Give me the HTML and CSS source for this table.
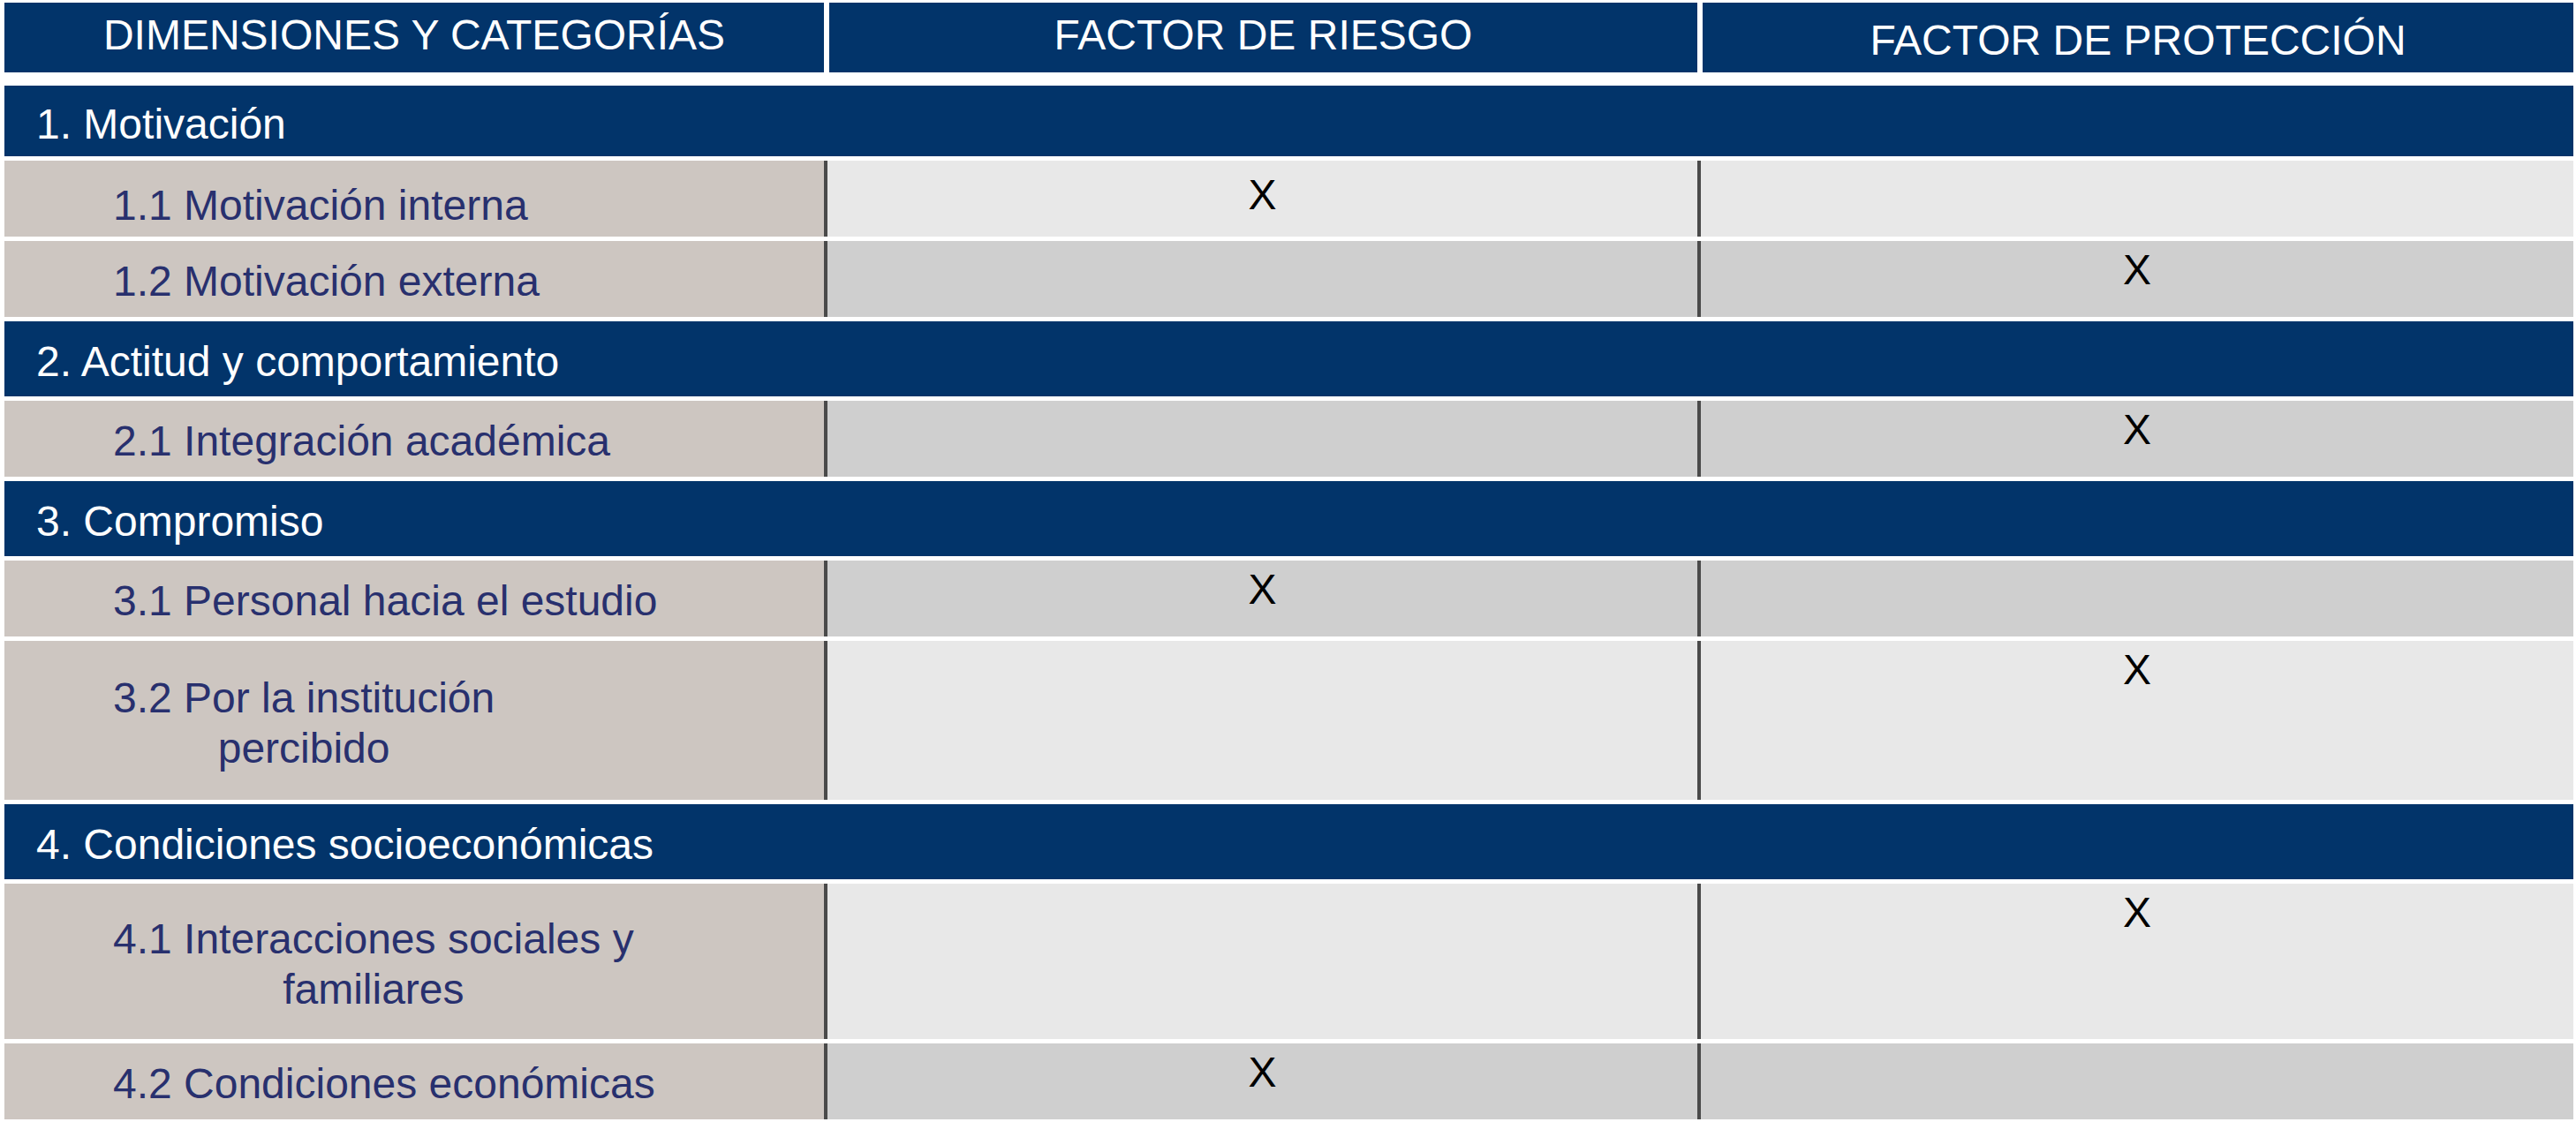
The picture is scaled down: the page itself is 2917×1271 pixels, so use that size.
FILE: index.html
```html
<!DOCTYPE html>
<html lang="es">
<head>
<meta charset="utf-8">
<title>Dimensiones y categorías</title>
<link rel="stylesheet" href="styles.css">
</head>
<body>
<div class="table">
  <div class="row head">
    <div class="hcell">DIMENSIONES Y CATEGORÍAS</div>
    <div class="hcell">FACTOR DE RIESGO</div>
    <div class="hcell hcell--low">FACTOR DE PROTECCIÓN</div>
  </div>

  <div class="section section--first">1. Motivación</div>
  <div class="row data data--first">
    <div class="label"><span class="label-text">1.1 Motivación interna</span></div>
    <div class="cell light">X</div>
    <div class="cell light"></div>
  </div>
  <div class="row data">
    <div class="label"><span class="label-text">1.2 Motivación externa</span></div>
    <div class="cell dark"></div>
    <div class="cell dark">X</div>
  </div>

  <div class="section">2. Actitud y comportamiento</div>
  <div class="row data">
    <div class="label"><span class="label-text">2.1 Integración académica</span></div>
    <div class="cell dark"></div>
    <div class="cell dark">X</div>
  </div>

  <div class="section">3. Compromiso</div>
  <div class="row data">
    <div class="label"><span class="label-text">3.1 Personal hacia el estudio</span></div>
    <div class="cell dark">X</div>
    <div class="cell dark"></div>
  </div>
  <div class="row data data--tall">
    <div class="label"><span class="label-text">3.2 Por la institución<br>percibido</span></div>
    <div class="cell light"></div>
    <div class="cell light">X</div>
  </div>

  <div class="section">4. Condiciones socioeconómicas</div>
  <div class="row data data--tall2">
    <div class="label"><span class="label-text">4.1 Interacciones sociales y<br>familiares</span></div>
    <div class="cell light"></div>
    <div class="cell light">X</div>
  </div>
  <div class="row data">
    <div class="label"><span class="label-text">4.2 Condiciones económicas</span></div>
    <div class="cell dark">X</div>
    <div class="cell dark"></div>
  </div>
</div>
</body>
</html>
```

FILE: styles.css
```css
html, body {
  margin: 0;
  padding: 0;
  background: #ffffff;
}

body {
  font-family: "Liberation Sans", Arial, Helvetica, sans-serif;
  font-size: 48px;
  width: 2917px;
  height: 1271px;
  overflow: hidden;
}

.table {
  display: flex;
  flex-direction: column;
  gap: 5px;
  padding: 3px 3px 0 5px;
}

.row {
  display: grid;
}

.head {
  grid-template-columns: 928px 983px 986px;
  column-gap: 6px;
  height: 79px;
  margin-bottom: 10px;
}

.hcell {
  background: #02346a;
  color: #ffffff;
  text-align: center;
  padding-top: 10px;
  line-height: 54px;
}

.hcell--low {
  padding-top: 16px;
}

.section {
  background: #02346a;
  color: #ffffff;
  height: 85px;
  display: flex;
  align-items: center;
  padding: 6px 0 0 36px;
  box-sizing: border-box;
}

.section--first {
  height: 80px;
}

.data {
  grid-template-columns: 928px 989px 992px;
  height: 86px;
}

.data--tall {
  height: 180px;
}

.data--tall2 {
  height: 176px;
}

.label {
  background: #cdc6c1;
  color: #28306e;
  display: flex;
  align-items: center;
  padding-left: 123px;
  padding-top: 5px;
}

.data--first .label {
  padding-top: 14px;
}

.label-text {
  display: inline-block;
  text-align: center;
  line-height: 57px;
}

.cell {
  border-left: 4px solid #4a4a4a;
  color: #000000;
  text-align: center;
  padding-top: 6px;
  line-height: 54px;
}

.data--first .cell {
  padding-top: 12px;
}

.light {
  background: #e8e8e8;
}

.dark {
  background: #cfcfcf;
}
```
